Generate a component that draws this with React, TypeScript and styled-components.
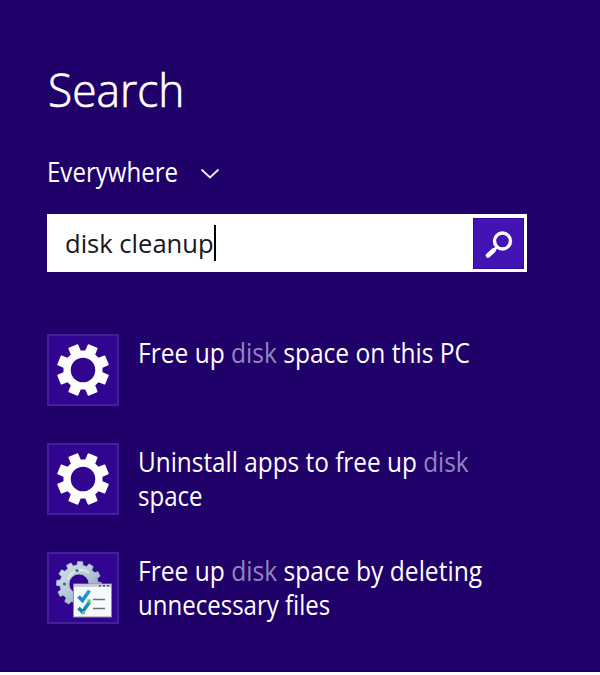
import React from "react";
import styled, { createGlobalStyle } from "styled-components";

const GlobalStyle = createGlobalStyle`
  * { box-sizing: border-box; }
  body { margin: 0; background: #fff; }
`;

const Panel = styled.main`
  width: 600px;
  height: 672px;
  padding: 59px 0 0 47px;
  background: #200069;
  border-bottom: 1px solid #170058;
  box-shadow: 0 1px 0 #a99fc9;
  color: #fff;
  font-family: "Open Sans", "Noto Sans", sans-serif;
  overflow: hidden;
`;

const Line = styled.span<{ $stretch: number }>`
  display: block;
  width: max-content;
  white-space: nowrap;
  transform: scaleX(${(p) => p.$stretch});
  transform-origin: 0 50%;
`;

const Title = styled.h1`
  margin: 0;
  height: 60px;
  padding-left: 1px;
  font-size: 46.5px;
  font-weight: 300;
  line-height: 60px;
  -webkit-text-stroke: 0.7px #fff;
`;

const Scope = styled.button`
  display: flex;
  align-items: center;
  width: 174px;
  height: 36px;
  margin: 35px 0 0;
  padding: 0;
  border: 0;
  background: none;
  color: #fff;
  font: 400 26.5px/36px "Open Sans", "Noto Sans", sans-serif;
`;

const ScopeLabel = styled.span`
  width: 153px;
`;

const Chevron = styled.svg`
  flex: none;
  width: 20px;
  height: 12px;
  margin-top: 4px;
`;

const SearchBox = styled.div`
  display: flex;
  align-items: center;
  width: 480px;
  height: 58px;
  margin-top: 24px;
  padding: 0 3px 0 18px;
  background: #fff;
`;

const Query = styled.div`
  flex: 1;
  display: flex;
  align-items: center;
  color: #17171b;
  font-size: 26px;
  line-height: 36px;
`;

const QueryText = styled.span`
  width: 149px;
`;

const Caret = styled.span`
  width: 2px;
  height: 36px;
  background: #000;
`;

const SearchButton = styled.button`
  display: block;
  width: 51px;
  height: 51px;
  padding: 0;
  border: 1px solid #3207a2;
  background: #4314b4;

  svg { display: block; }
`;

const Results = styled.ul`
  display: grid;
  row-gap: 37px;
  margin: 62px 0 0;
  padding: 0;
  list-style: none;
`;

const Result = styled.li`
  display: flex;
  height: 72px;
`;

const Tile = styled.div`
  flex: none;
  width: 72px;
  height: 72px;
  margin-right: 19px;
  border: 2px solid #43209a;
  background: #320591;

  svg { display: block; width: 68px; height: 68px; }
`;

const Label = styled.div`
  padding-top: 2px;
  font-size: 27px;
  line-height: 34px;
`;

const Match = styled.span`
  color: #9385be;
`;

function gearPath(c: number, teeth: number, base: number, outer: number, hole: number, wide: number, tip: number, turn: number) {
  const pts: string[] = [];
  for (let i = 0; i < teeth; i++) {
    const mid = ((i + turn) * 2 * Math.PI) / teeth;
    [[base, -wide], [outer, -tip], [outer, tip], [base, wide]].forEach(([r, d]) => {
      pts.push(`${(c + r * Math.cos(mid + d)).toFixed(2)} ${(c + r * Math.sin(mid + d)).toFixed(2)}`);
    });
  }
  return `M${pts.join("L")}ZM${c - hole} ${c}a${hole} ${hole} 0 1 0 ${hole * 2} 0a${hole} ${hole} 0 1 0 ${-hole * 2} 0Z`;
}

const settingsGear = gearPath(34, 8, 19, 25.6, 13, 0.25, 0.18, 0.5);
const toolGear = gearPath(30, 12, 19, 22.5, 10, 0.16, 0.11, 0.1);

const GearIcon = () => (
  <svg viewBox="0 0 68 68">
    <path d={settingsGear} fill="#fff" stroke="#fff" strokeWidth="1.4" strokeLinejoin="round" fillRule="evenodd" />
  </svg>
);

const CleanupIcon = () => (
  <svg viewBox="0 0 68 68">
    <defs>
      <linearGradient id="metal" x1="0" y1="0" x2="1" y2="1">
        <stop offset="0" stopColor="#d5e3eb" />
        <stop offset="0.45" stopColor="#b7cbd8" />
        <stop offset="1" stopColor="#8295ad" />
      </linearGradient>
      <linearGradient id="tick" x1="0" y1="1" x2="1" y2="0">
        <stop offset="0" stopColor="#1674b0" />
        <stop offset="1" stopColor="#20a6d8" />
      </linearGradient>
    </defs>
    <path d={toolGear} fill="url(#metal)" stroke="#a9bdcb" strokeWidth="0.8" strokeLinejoin="round" fillRule="evenodd" />
    <path d="M19 26a13 13 0 0 1 21-7" fill="none" stroke="#dce7ed" strokeWidth="2" />
    <circle cx="28" cy="16.5" r="1.6" fill="#4b6383" />
    <circle cx="15.5" cy="30" r="1.6" fill="#4b6383" />
    <rect x="24.5" y="30" width="38" height="33" fill="#f7f9fa" stroke="#8b8e9e" />
    <path d="M25 30.5h37v2.5H25z" fill="#c7ccd6" />
    <path d="M50 31.7h2m2 0h2m2 0h2" stroke="#45536b" strokeWidth="1.4" />
    <path d="M29.5 42.5l4 4 7-10M29.5 54l4 4 7-10" fill="none" stroke="url(#tick)" strokeWidth="3.6" />
    <path d="M38.5 45.5h3v3h-3zM33 57h3v3h-3z" fill="#55cf64" />
    <path d="M44 45.5h12M44 54.5h12" stroke="#657087" strokeWidth="1.5" />
  </svg>
);

interface Part { text: string; match?: boolean }
interface Row { parts: Part[]; stretch: number }

const results: { tool?: boolean; rows: Row[] }[] = [
  { rows: [{ stretch: 0.909, parts: [{ text: "Free up " }, { text: "disk", match: true }, { text: " space on this PC" }] }] },
  {
    rows: [
      { stretch: 0.902, parts: [{ text: "Uninstall apps to free up " }, { text: "disk", match: true }] },
      { stretch: 0.89, parts: [{ text: "space" }] },
    ],
  },
  {
    tool: true,
    rows: [
      { stretch: 0.911, parts: [{ text: "Free up " }, { text: "disk", match: true }, { text: " space by deleting" }] },
      { stretch: 0.89, parts: [{ text: "unnecessary files" }] },
    ],
  },
];

export default function App() {
  return (
    <>
      <GlobalStyle />
      <Panel>
        <Title><Line $stretch={0.952}>Search</Line></Title>
        <Scope>
          <ScopeLabel><Line $stretch={0.908}>Everywhere</Line></ScopeLabel>
          <Chevron viewBox="0 0 20 12">
            <path d="M1.5 1.5l8.5 8 8.5-8" fill="none" stroke="#f0ecfa" strokeWidth="1.8" />
          </Chevron>
        </Scope>
        <SearchBox>
          <Query>
            <QueryText><Line $stretch={0.983}>disk cleanup</Line></QueryText>
            <Caret />
          </Query>
          <SearchButton aria-label="Search">
            <svg width="49" height="49" viewBox="0 0 49 49">
              <circle cx="28.5" cy="22" r="8" fill="none" stroke="#fff" strokeWidth="3.4" />
              <path d="M22.5 28.5l-4 4" stroke="#fff" strokeWidth="3" />
              <path d="M19.5 31.5l-5.5 5" stroke="#fff" strokeWidth="4.5" strokeLinecap="round" />
            </svg>
          </SearchButton>
        </SearchBox>
        <Results>
          {results.map((result, i) => (
            <Result key={i}>
              <Tile>{result.tool ? <CleanupIcon /> : <GearIcon />}</Tile>
              <Label>
                {result.rows.map((row, r) => (
                  <Line key={r} $stretch={row.stretch}>
                    {row.parts.map((part, p) => (part.match ? <Match key={p}>{part.text}</Match> : part.text))}
                  </Line>
                ))}
              </Label>
            </Result>
          ))}
        </Results>
      </Panel>
    </>
  );
}
